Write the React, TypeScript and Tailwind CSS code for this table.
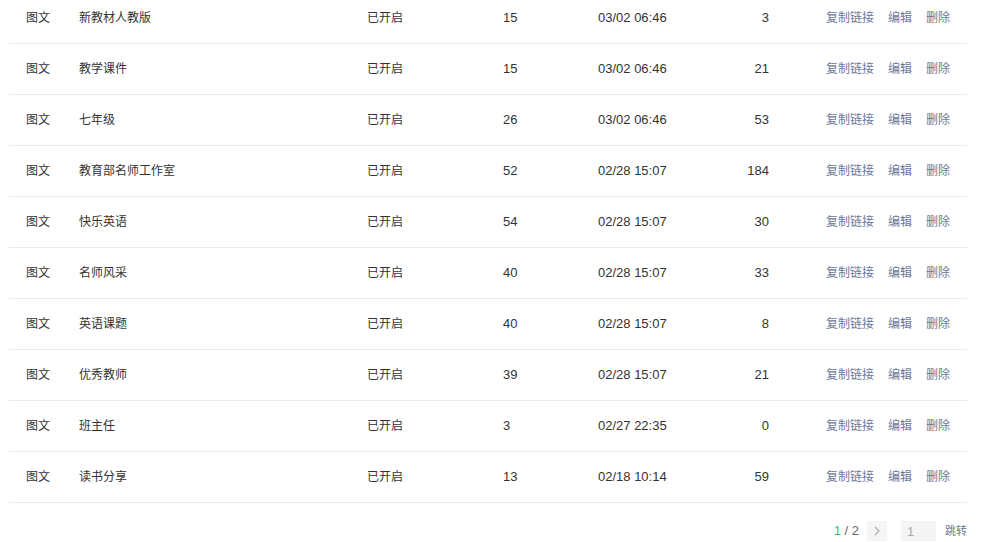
const rows = [
  { type: "图文", title: "新教材人教版", status: "已开启", count: 15, date: "03/02 06:46", num: 3 },
  { type: "图文", title: "教学课件", status: "已开启", count: 15, date: "03/02 06:46", num: 21 },
  { type: "图文", title: "七年级", status: "已开启", count: 26, date: "03/02 06:46", num: 53 },
  { type: "图文", title: "教育部名师工作室", status: "已开启", count: 52, date: "02/28 15:07", num: 184 },
  { type: "图文", title: "快乐英语", status: "已开启", count: 54, date: "02/28 15:07", num: 30 },
  { type: "图文", title: "名师风采", status: "已开启", count: 40, date: "02/28 15:07", num: 33 },
  { type: "图文", title: "英语课题", status: "已开启", count: 40, date: "02/28 15:07", num: 8 },
  { type: "图文", title: "优秀教师", status: "已开启", count: 39, date: "02/28 15:07", num: 21 },
  { type: "图文", title: "班主任", status: "已开启", count: 3, date: "02/27 22:35", num: 0 },
  { type: "图文", title: "读书分享", status: "已开启", count: 13, date: "02/18 10:14", num: 59 },
];

const App = () => {
  return (
    <div className="w-[1000px] min-h-screen bg-white pl-[9px] pr-[33px] font-['Liberation_Sans','Noto_Sans_CJK_SC',sans-serif] text-[#333]">
      <div className="-mt-[7px]">
        {rows.map((r, i) => (
          <div
            key={i}
            className="grid h-[51px] grid-cols-[53px_288px_136px_95px_102px_69px_57px_1fr] items-center border-b border-[#ebebeb] pl-[17px]"
          >
            <span className="text-[12px]">{r.type}</span>
            <span className="text-[12px]">{r.title}</span>
            <span className="text-[12px]">{r.status}</span>
            <span className="text-[13px]">{r.count}</span>
            <span className="text-[13px]">{r.date}</span>
            <span className="text-right text-[13px]">{r.num}</span>
            <span />
            <div className="flex gap-[14px] text-[12px] text-[#6b7899]">
              <a className="cursor-pointer">复制链接</a>
              <a className="cursor-pointer">编辑</a>
              <a className="cursor-pointer">删除</a>
            </div>
          </div>
        ))}
      </div>
      <div className="mt-[18px] flex h-[20px] items-center justify-end">
        <span className="text-[13px] text-[#666]">
          <span className="text-[#3dbd7d]">1</span> / 2
        </span>
        <button className="ml-[8px] flex h-[20px] w-[20px] items-center justify-center bg-[#f5f5f5] text-[#aaa]">
          <svg width="8" height="10" viewBox="0 0 8 10" fill="none" stroke="currentColor" strokeWidth="1.2">
            <path d="M2 1l4 4-4 4" />
          </svg>
        </button>
        <input
          defaultValue="1"
          className="ml-[14px] h-[20px] w-[35px] bg-[#f5f5f5] px-[6px] text-[13px] text-[#aaa] outline-none"
        />
        <span className="ml-[9px] cursor-pointer text-[11px] text-[#6b7899]">跳转</span>
      </div>
    </div>
  );
};

export default App;
